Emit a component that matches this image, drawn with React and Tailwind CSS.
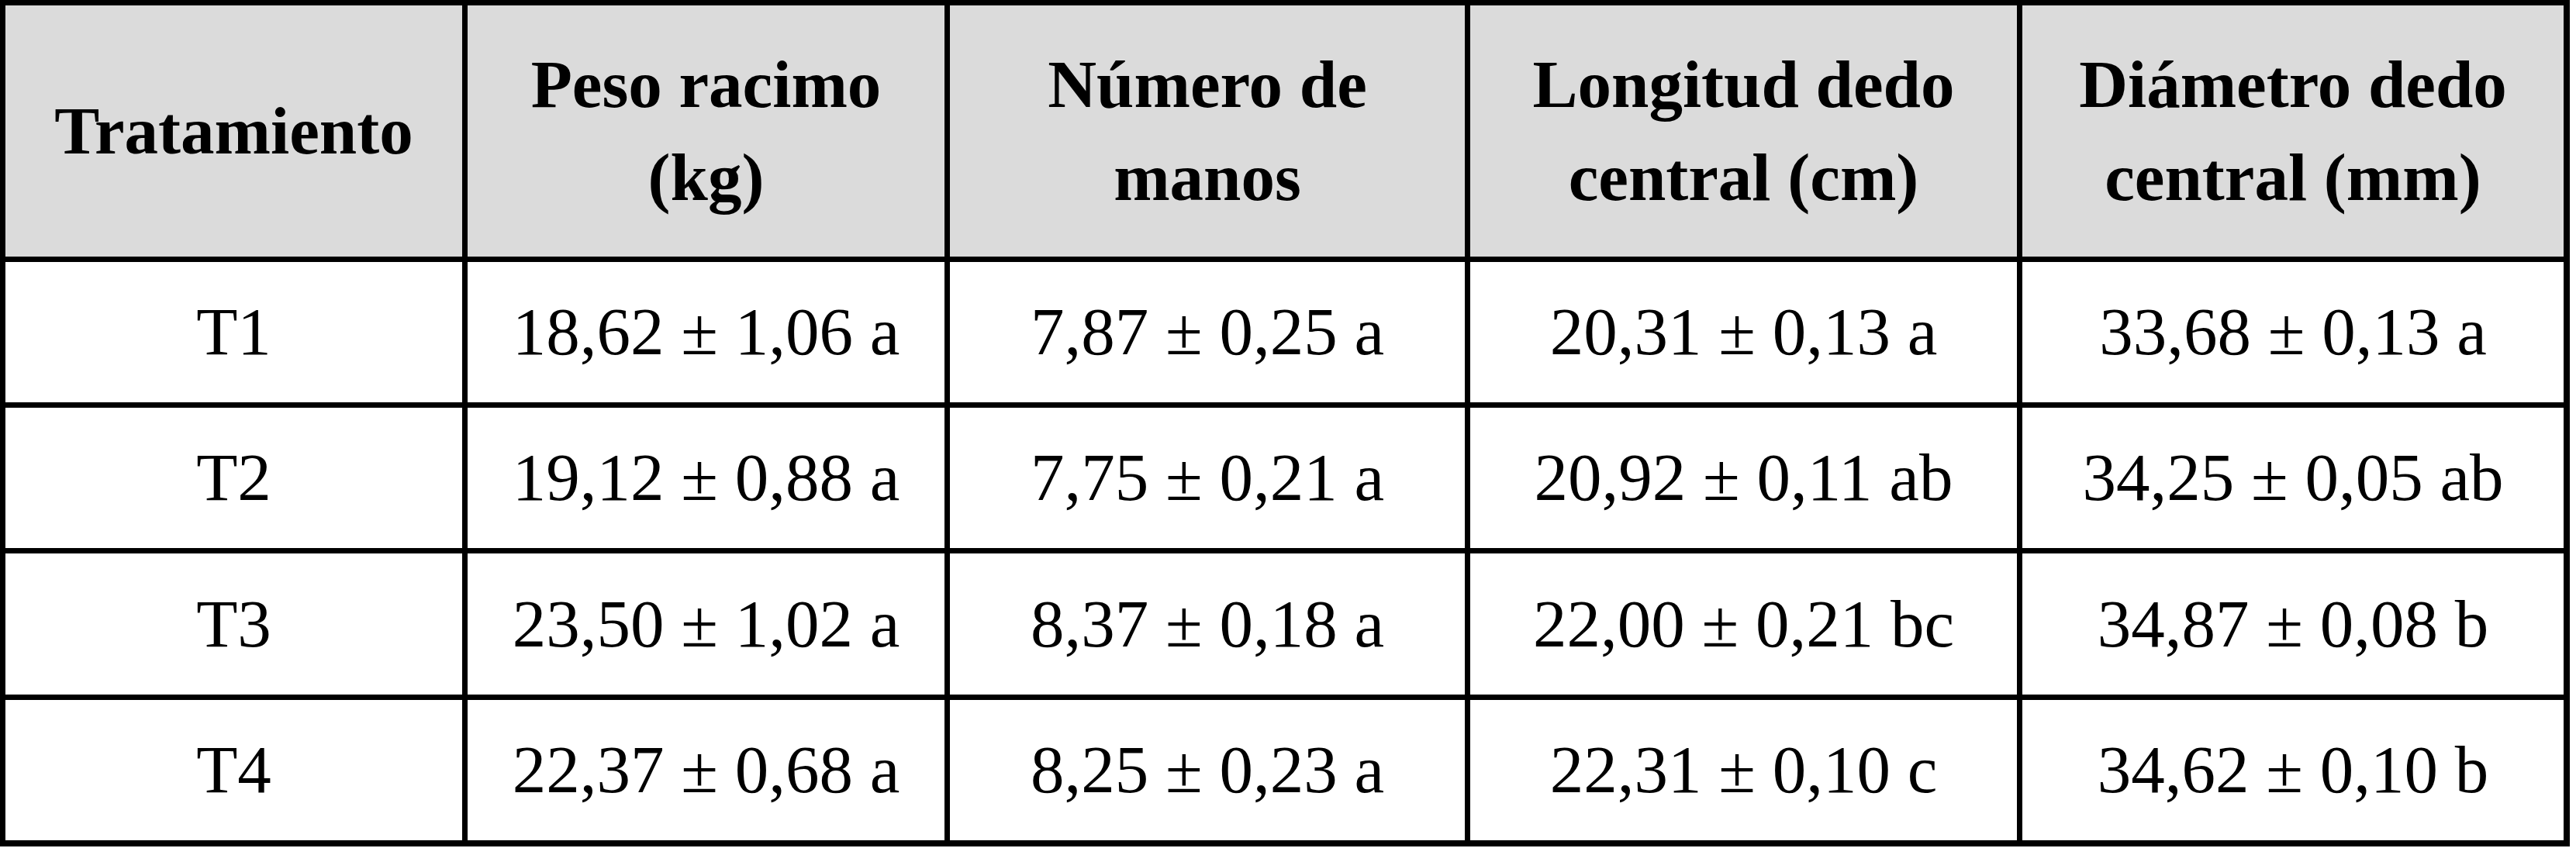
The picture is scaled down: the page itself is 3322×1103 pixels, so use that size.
export default function App() {
  const headers = [
    ["Tratamiento"],
    ["Peso racimo", "(kg)"],
    ["Número de", "manos"],
    ["Longitud dedo", "central (cm)"],
    ["Diámetro dedo", "central (mm)"],
  ];
  const rows = [
    ["T1", "18,62 ± 1,06 a", "7,87 ± 0,25 a", "20,31 ± 0,13 a", "33,68 ± 0,13 a"],
    ["T2", "19,12 ± 0,88 a", "7,75 ± 0,21 a", "20,92 ± 0,11 ab", "34,25 ± 0,05 ab"],
    ["T3", "23,50 ± 1,02 a", "8,37 ± 0,18 a", "22,00 ± 0,21 bc", "34,87 ± 0,08 b"],
    ["T4", "22,37 ± 0,68 a", "8,25 ± 0,23 a", "22,31 ± 0,10 c", "34,62 ± 0,10 b"],
  ];
  return (
    <div className="w-[3322px] h-[1103px] bg-white font-['Liberation_Serif','Times_New_Roman',serif]">
      <div
        role="table"
        className="grid w-fit grid-cols-[589px_615px_664px_705px_698px] grid-rows-[324px_181px_181px_182px_181px] gap-[7px] bg-black p-[7px] pr-[8px] pb-[8px] text-[87px] text-black"
      >
        {headers.map((h, i) => (
          <div key={i} role="columnheader" className="flex flex-col items-center justify-center bg-[#dbdbdb] font-bold leading-[120px] text-center">
            {h.map((line, j) => (
              <span key={j} className="whitespace-nowrap">{line}</span>
            ))}
          </div>
        ))}
        {rows.map((r, i) =>
          r.map((c, j) => (
            <div key={`${i}-${j}`} role="cell" className="flex items-center justify-center bg-white leading-[1.15] whitespace-nowrap">
              {c}
            </div>
          ))
        )}
      </div>
    </div>
  );
}
